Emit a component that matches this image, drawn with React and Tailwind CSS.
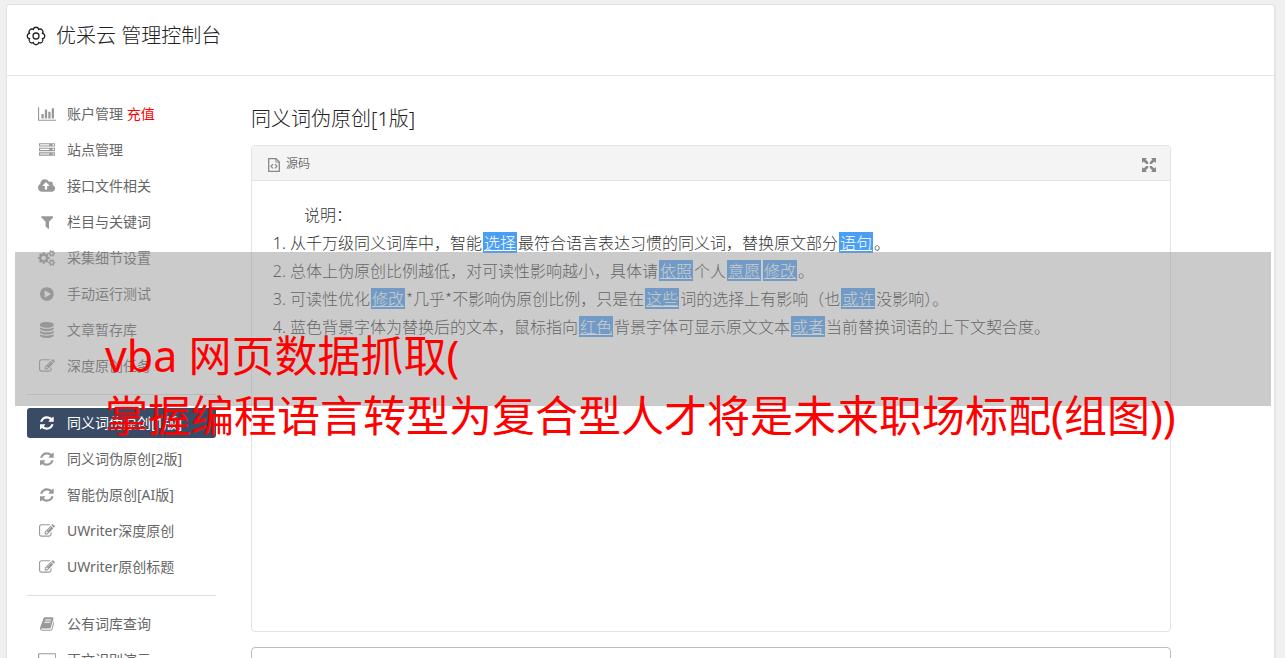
import { useState } from "react";
import clsx from "clsx";

const SMALL_GEAR =
  "v140q0 16-149 31-12 27-30 52 51 113 51 138 0 4-4 7-122 71-124 71-8 0-46-47t-52-68q-20 2-30 2t-30-2q-14 21-52 68t-46 47q-2 0-124-71-4-3-4-7 0-25 51-138-18-25-30-52-149-15-149-31v-140q0-16 149-31 13-29 30-52-51-113-51-138 0-4 4-7 4-2 35-20t59-34 30-16q8 0 46 46.5t52 67.5q20-2 30-2t30 2q51-71 92-112l6-2q4 0 124 70 4 3 4 7 0 25-51 138 17 23 30 52 149 15 149 31z";

// [view box width, path], every glyph is 1792 units high
const ICONS = {
  chart: [
    2048,
    "M640 896v512h-256v-512h256zm384-512v1024h-256v-1024h256zm1024 1152v128h-2048v-1536h128v1408h1920zm-640-896v768h-256v-768h256zm384-384v1152h-256v-1152h256z",
  ],
  server: [
    1792,
    "M128 1408h1024v-128h-1024v128zm0-512h1024v-128h-1024v128zm1568 448q0-40-28-68t-68-28-68 28-28 68 28 68 68 28 68-28 28-68zm-1568-960h1024v-128h-1024v128zm1568 448q0-40-28-68t-68-28-68 28-28 68 28 68 68 28 68-28 28-68zm0-512q0-40-28-68t-68-28-68 28-28 68 28 68 68 28 68-28 28-68zm96 832v384h-1792v-384h1792zm0-512v384h-1792v-384h1792zm0-512v384h-1792v-384h1792z",
  ],
  upload: [
    1920,
    "M1280 864q0-14-9-23l-352-352q-9-9-23-9t-23 9l-351 351q-10 12-10 24 0 14 9 23t23 9h224v352q0 13 9.5 22.5t22.5 9.5h192q13 0 22.5-9.5t9.5-22.5v-352h224q13 0 22.5-9.5t9.5-22.5zm640 288q0 159-112.5 271.5t-271.5 112.5h-1088q-185 0-316.5-131.5t-131.5-316.5q0-130 70-240t188-165q-2-30-2-43 0-212 150-362t362-150q156 0 285.5 87t188.5 231q71-62 166-62 106 0 181 75t75 181q0 76-41 138 130 31 213.5 135.5t83.5 238.5z",
  ],
  filter: [
    1408,
    "M1403 295q17 41-14 70l-493 493v742q0 42-39 59-13 5-25 5-27 0-45-19l-256-256q-19-19-19-45v-486l-493-493q-31-29-14-70 17-39 59-39h1280q42 0 59 39z",
  ],
  cogs: [
    1920,
    "M896 896q0-106-75-181t-181-75-181 75-75 181 75 181 181 75 181-75 75-181zm768 512q0-52-38-90t-90-38-90 38-38 90q0 53 37.5 90.5t90.5 37.5 90.5-37.5 37.5-90.5zm0-1024q0-52-38-90t-90-38-90 38-38 90q0 53 37.5 90.5t90.5 37.5 90.5-37.5 37.5-90.5zm-384 421v185q0 10-7 19.5t-16 10.5l-155 24q-11 35-32 76 34 48 90 115 7 11 7 20 0 12-7 19-23 30-82.5 89.5t-78.5 59.5q-11 0-21-7l-115-90q-37 19-77 31-11 108-23 155-7 24-30 24h-186q-11 0-20-7.5t-10-17.5l-23-153q-34-10-75-31l-118 89q-7 7-20 7-11 0-21-8-144-133-144-160 0-9 7-19 10-14 41-53t47-61q-23-44-35-82l-152-24q-10-1-17-9.5t-7-19.5v-185q0-10 7-19.5t16-10.5l155-24q11-35 32-76-34-48-90-115-7-11-7-20 0-12 7-20 22-30 82-89t79-59q11 0 21 7l115 90q34-18 77-32 11-108 23-154 7-24 30-24h186q11 0 20 7.5t10 17.5l23 153q34 10 75 31l118-89q8-7 20-7 11 0 21 8 144 133 144 160 0 8-7 19-12 16-42 54t-45 60q23 48 34 82l152 23q10 2 17 10.5t7 19.5z" +
      "M1920 1338" +
      SMALL_GEAR +
      "M1920 314" +
      SMALL_GEAR,
  ],
  play: [
    1536,
    "M768 128q209 0 385.5 103t279.5 279.5 103 385.5-103 385.5-279.5 279.5-385.5 103-385.5-103-279.5-279.5-103-385.5 103-385.5 279.5-279.5 385.5-103zm384 823q32-18 32-55t-32-55l-544-320q-31-19-64-1-32 19-32 56v640q0 37 32 56 16 8 32 8 17 0 32-9z",
  ],
  database: [
    1536,
    "M768 768q237 0 443-43t325-127v170q0 69-103 128t-280 93.5-385 34.5-385-34.5-280-93.5-103-128v-170q119 84 325 127t443 43zm0 768q237 0 443-43t325-127v170q0 69-103 128t-280 93.5-385 34.5-385-34.5-280-93.5-103-128v-170q119 84 325 127t443 43zm0-384q237 0 443-43t325-127v170q0 69-103 128t-280 93.5-385 34.5-385-34.5-280-93.5-103-128v-170q119 84 325 127t443 43zm0-1152q208 0 385 34.5t280 93.5 103 128v128q0 69-103 128t-280 93.5-385 34.5-385-34.5-280-93.5-103-128v-128q0-69 103-128t280-93.5 385-34.5z",
  ],
  edit: [
    1792,
    "M888 1184l116-116-152-152-116 116v56h96v96h56zm440-720q-16-16-33 1l-350 350q-17 17-1 33t33-1l350-350q17-17 1-33zm80 594v190q0 119-84.5 203.5t-203.5 84.5h-832q-119 0-203.5-84.5t-84.5-203.5v-832q0-119 84.5-203.5t203.5-84.5h832q63 0 117 25 15 7 18 23 3 17-9 29l-49 49q-14 14-32 8-23-6-45-6h-832q-66 0-113 47t-47 113v832q0 66 47 113t113 47h832q66 0 113-47t47-113v-126q0-13 9-22l64-64q15-15 35-7t20 29zm-96-738l288 288-672 672h-288v-288zm444 132l-92 92-288-288 92-92q28-28 68-28t68 28l152 152q28 28 28 68t-28 68z",
  ],
  refresh: [
    1536,
    "M1511 1056q0 5-1 7-64 268-268 434.5t-478 166.5q-146 0-282.5-55t-243.5-157l-129 129q-19 19-45 19t-45-19-19-45v-448q0-26 19-45t45-19h448q26 0 45 19t19 45-19 45l-137 137q71 66 161 102t187 36q134 0 250-65t186-179q11-17 53-117 8-23 30-23h192q13 0 22.5 9.5t9.5 22.5zm25-800v448q0 26-19 45t-45 19h-448q-26 0-45-19t-19-45 19-45l138-138q-148-137-349-137-134 0-250 65t-186 179q-11 17-53 117-8 23-30 23h-199q-13 0-22.5-9.5t-9.5-22.5v-7q65-268 270-434.5t480-166.5q146 0 284 55.5t245 156.5l130-129q19-19 45-19t45 19 19 45z",
  ],
  book: [
    1664,
    "M1639 478q40 57 18 129l-275 906q-19 64-76.5 107.5t-122.5 43.5h-923q-77 0-148.5-53.5t-99.5-131.5q-24-67-2-127 0-4 3-27t4-37q1-8-3-21.5t-3-19.5q2-11 8-21t16.5-23.5 16.5-23.5q23-38 45-91.5t30-91.5q3-10 .5-30t-.5-28q3-11 17-28t17-23q21-36 42-92t25-90q1-9-2.5-32t.5-28q4-13 22-30.5t22-22.5q19-26 42.5-84.5t27.5-96.5q1-8-3-25.5t-2-26.5q2-8 9-18t18-23 17-21q8-12 16.5-30.5t15-35 16-36 19.5-32 26.5-23.5 36-11.5 47.5 5.5l-1 3q38-9 51-9h761q74 0 114 56t18 130l-274 906q-36 119-71.5 153.5t-128.5 34.5h-869q-27 0-38 15-11 16-1 43 24 70 144 70h923q29 0 56-15.5t35-41.5l300-987q7-22 5-57 38 15 59 43zm-1064 2q-4 13 2 22.5t20 9.5h608q13 0 25.5-9.5t16.5-22.5l21-64q4-13-2-22.5t-20-9.5h-608q-13 0-25.5 9.5t-16.5 22.5zm-83 256q-4 13 2 22.5t20 9.5h608q13 0 25.5-9.5t16.5-22.5l21-64q4-13-2-22.5t-20-9.5h-608q-13 0-25.5 9.5t-16.5 22.5z",
  ],
  laptop: [
    2048,
    "M160 128h1728q66 0 113 47t47 113v1088q0 66-47 113t-113 47h-1728q-66 0-113-47t-47-113v-1088q0-66 47-113t113-47zm0 128q-32 0-32 32v1088q0 32 32 32h1728q32 0 32-32v-1088q0-32-32-32z",
  ],
};

const MENU = [
  [
    { id: "account", icon: "chart", label: "账户管理", extra: "充值" },
    { id: "site", icon: "server", label: "站点管理" },
    { id: "api", icon: "upload", label: "接口文件相关" },
    { id: "keywords", icon: "filter", label: "栏目与关键词" },
    { id: "collect", icon: "cogs", label: "采集细节设置" },
    { id: "manual", icon: "play", label: "手动运行测试" },
    { id: "store", icon: "database", label: "文章暂存库" },
    { id: "deep", icon: "edit", label: "深度原创任务" },
  ],
  [
    { id: "synonym1", icon: "refresh", label: "同义词伪原创[1版]" },
    { id: "synonym2", icon: "refresh", label: "同义词伪原创[2版]" },
    { id: "ai", icon: "refresh", label: "智能伪原创[AI版]" },
    { id: "uwriter", icon: "edit", label: "UWriter深度原创" },
    { id: "uwriter-title", icon: "edit", label: "UWriter原创标题" },
  ],
  [
    { id: "words", icon: "book", label: "公有词库查询" },
    { id: "extract", icon: "laptop", label: "正文识别演示" },
  ],
];

function Icon({ name }) {
  const [width, path] = ICONS[name];
  return (
    <svg
      viewBox={`0 0 ${width} 1792`}
      className="h-4 w-auto shrink-0"
      fill="currentColor"
      fillRule="evenodd"
      aria-hidden="true"
    >
      <path d={path} />
    </svg>
  );
}

function GearIcon() {
  return (
    <svg
      viewBox="-10 -10 20 20"
      className="h-5 w-5"
      fill="none"
      stroke="currentColor"
      strokeWidth="1.3"
      aria-hidden="true"
    >
      <path d="M6.5 2.7A2.75 2.75 0 0 1 2.7 6.5A2.75 2.75 0 0 1-2.7 6.5A2.75 2.75 0 0 1-6.5 2.7A2.75 2.75 0 0 1-6.5-2.7A2.75 2.75 0 0 1-2.7-6.5A2.75 2.75 0 0 1 2.7-6.5A2.75 2.75 0 0 1 6.5-2.7A2.75 2.75 0 0 1 6.5 2.7Z" />
      <circle r="3" />
    </svg>
  );
}

function SourceIcon() {
  return (
    <svg
      viewBox="0 0 12 14"
      className="mt-1 h-[14px] w-3"
      fill="none"
      stroke="#888"
      aria-hidden="true"
    >
      <path d="M.7.7H8L11.3 4V13.3H.7Z" strokeWidth="1.3" />
      <path d="M7.8.7V4.2H11.3" strokeWidth=".8" />
      <path d="M5 6.2L3 8.3L5 10.4M7 6.2L9 8.3L7 10.4" strokeWidth="1.2" />
    </svg>
  );
}

function MaximizeIcon() {
  return (
    <svg
      viewBox="0 0 14 14"
      className="mt-1 h-[14px] w-[14px]"
      fill="#888"
      aria-hidden="true"
    >
      <path d="M0 0H5L3.6 1.6L6.2 4.2V6H4.4L1.6 3.6L0 5Z" />
      <path d="M14 0H9L10.4 1.6L7.8 4.2V6H9.6L12.4 3.6L14 5Z" />
      <path d="M0 14H5L3.6 12.4L6.2 9.8V8H4.4L1.6 10.4L0 9Z" />
      <path d="M14 14H9L10.4 12.4L7.8 9.8V8H9.6L12.4 10.4L14 9Z" />
    </svg>
  );
}

function Word({ children }) {
  return (
    <a
      href="#"
      className="mx-px inline-block h-[21px] bg-[#4a9ff5] px-px leading-[21px] text-white underline"
    >
      {children}
    </a>
  );
}

function Sidebar({ active, onSelect }) {
  return (
    <nav className="flex w-[189px] shrink-0 flex-col gap-1.5 pt-[23px] text-sm font-normal text-[#666]">
      {MENU.map((group, index) => (
        <div key={group[0].id} className="flex flex-col gap-1.5">
          {index > 0 && <hr className="my-[7px] border-[#ddd]" />}
          {group.map((item) => (
            <a
              key={item.id}
              href={`#${item.id}`}
              onClick={() => onSelect(item.id)}
              className={clsx(
                "flex h-[30px] items-center gap-[11px] rounded-[3px] pl-[11px] whitespace-nowrap",
                active === item.id && "bg-[#3a4b66] text-white",
              )}
            >
              <span
                className={clsx(
                  "flex w-[18px] shrink-0 justify-center",
                  active === item.id ? "text-white" : "text-[#999]",
                )}
              >
                <Icon name={item.icon} />
              </span>
              <span>
                {item.label}
                {item.extra && (
                  <span className="text-[#f00]"> {item.extra}</span>
                )}
              </span>
            </a>
          ))}
        </div>
      ))}
    </nav>
  );
}

function SourcePanel() {
  return (
    <section className="min-h-[487px] rounded border border-[#e3e3e3] font-['Noto_Sans_CJK_SC',sans-serif]">
      <div className="flex h-[35px] items-center justify-between rounded-t border-b border-[#e3e3e3] bg-[#f4f4f4] pr-3.5 pl-4">
        <button type="button" className="flex items-center gap-1.5 text-xs">
          <SourceIcon />
          源码
        </button>
        <button type="button" aria-label="最大化">
          <MaximizeIcon />
        </button>
      </div>
      <div className="px-5 pt-[19px] text-base leading-7">
        <p className="indent-8">说明：</p>
        <ol className="list-decimal pl-[18px] marker:font-['Noto_Sans',sans-serif]">
          <li>
            从千万级同义词库中，智能<Word>选择</Word>
            最符合语言表达习惯的同义词，替换原文部分<Word>语句</Word>。
          </li>
          <li>
            总体上伪原创比例越低，对可读性影响越小，具体请<Word>依照</Word>个人
            <Word>意愿</Word>
            <Word>修改</Word>。
          </li>
          <li>
            可读性优化<Word>修改</Word>*几乎*不影响伪原创比例，只是在
            <Word>这些</Word>词的选择上有影响（也<Word>或许</Word>没影响）。
          </li>
          <li>
            蓝色背景字体为替换后的文本，鼠标指向<Word>红色</Word>
            背景字体可显示原文文本<Word>或者</Word>当前替换词语的上下文契合度。
          </li>
        </ol>
      </div>
    </section>
  );
}

function Banner() {
  return (
    <div className="pointer-events-none absolute top-[252px] right-[14px] left-[15px] h-[154px] bg-[#979797]/50">
      <p className="pt-[74px] pl-[90px] text-[43px] leading-[60px] font-normal whitespace-nowrap text-[#f00]">
        vba 网页数据抓取(
        <br />
        掌握编程语言转型为复合型人才将是未来职场标配(组图))
      </p>
    </div>
  );
}

export default function App() {
  const [active, setActive] = useState("synonym1");

  return (
    <div className="relative h-screen overflow-hidden bg-[#f0f0f0] pt-1 pr-[9px] pl-[6px] font-['Noto_Sans','Noto_Sans_CJK_SC',sans-serif] font-light text-[#333]">
      <div className="rounded border border-r-2 border-[#e3e3e3] bg-white pb-10">
        <header className="flex h-[71px] items-center gap-2.5 border-b border-[#e3e3e3] pb-2 pl-[19px] text-[#222]">
          <GearIcon />
          <h1 className="text-xl">优采云 管理控制台</h1>
        </header>
        <div className="flex gap-[35px] pr-4 pl-5">
          <Sidebar active={active} onSelect={setActive} />
          <main className="max-w-[920px] min-w-0 flex-1 pt-7">
            <h2 className="mb-[11px] text-xl leading-[30px] text-[#222]">
              同义词伪原创[1版]
            </h2>
            <SourcePanel />
            <textarea
              aria-label="原文"
              className="mt-[15px] block h-40 w-full resize-none rounded border border-[#bbb] p-2"
            />
          </main>
        </div>
      </div>
      <Banner />
    </div>
  );
}
